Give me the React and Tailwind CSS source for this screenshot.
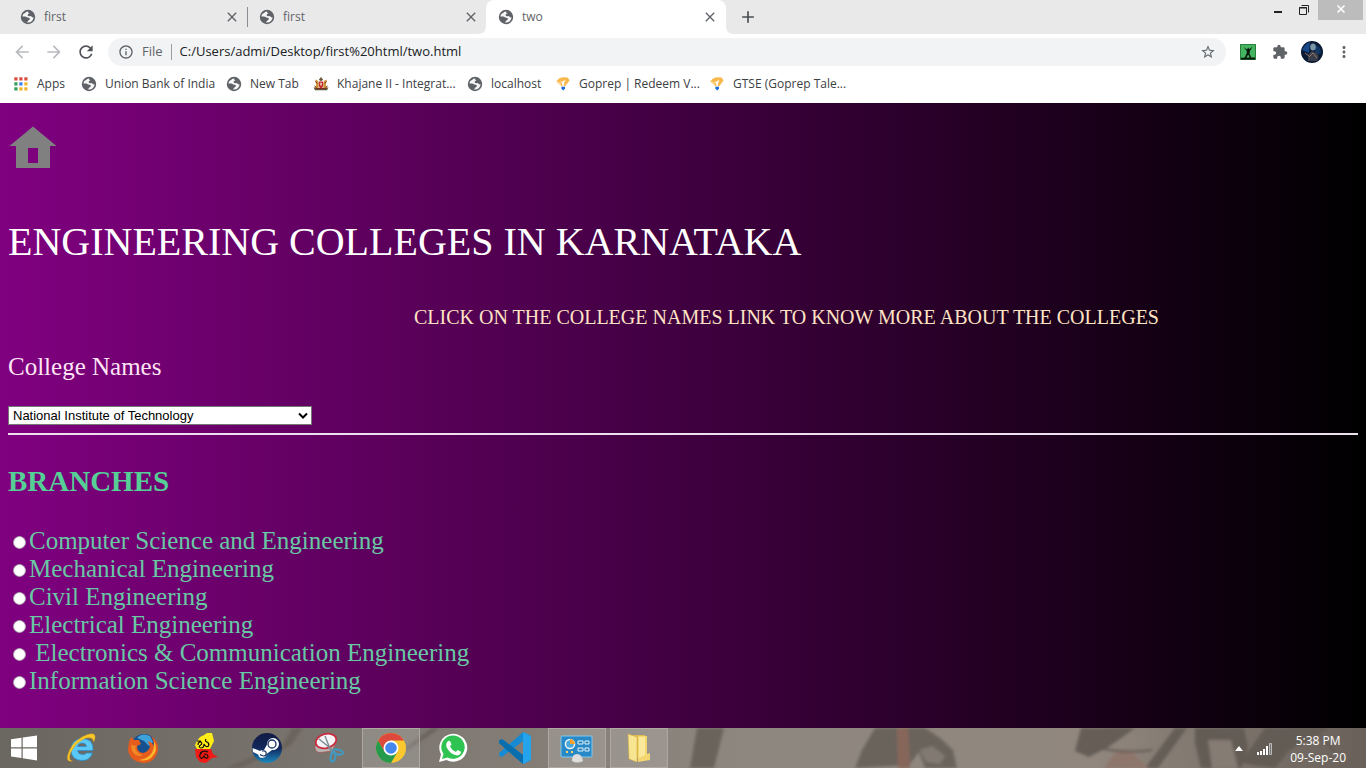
import React from "react";
import { MdArrowBack, MdArrowForward, MdRefresh, MdStarBorder, MdExtension, MdMoreVert, MdInfoOutline, MdClose, MdAdd } from "react-icons/md";

const branches = [
  "Computer Science and Engineering",
  "Mechanical Engineering",
  "Civil Engineering",
  "Electrical Engineering",
  "\u00a0Electronics & Communication Engineering",
  "Information Science Engineering",
];

function Globe() {
  return (
    <svg viewBox="0 0 16 16" className="size-4 shrink-0" aria-hidden="true">
      <circle cx="8" cy="8" r="6.4" fill="#f6f6f6" stroke="#5f6368" strokeWidth="1.6" />
      <path d="M8.6 1.6A6.4 6.4 0 0 1 14.4 8L13 8.6 11.6 8 11.2 7 9 7.2 7.6 6.4 8 5 9.4 4.4 8 3.2Z" fill="#5f6368" />
      <path d="M1.6 7.4 5.4 7.4 7.4 8.6 9.6 9 9.8 10.6 8.4 11.4 7.6 12.6 6.6 14.2A6.4 6.4 0 0 1 1.6 7.4Z" fill="#5f6368" />
      <path d="M2 5.2 4.4 2.6 6.4 1.8 5.2 4Z" fill="#5f6368" />
    </svg>
  );
}

function Tab({ title, active, divider }) {
  return (
    <div className={active ? "relative flex h-full w-60 items-center rounded-t-lg bg-white pr-2 pl-3" : "flex h-full w-[239px] items-center pr-[7px] pl-3"}>
      {active && (
        <>
          <svg viewBox="0 0 8 8" className="absolute bottom-0 -left-2 size-2" aria-hidden="true"><path d="M8 0V8H0Q8 8 8 0Z" fill="#fff" /></svg>
          <svg viewBox="0 0 8 8" className="absolute -right-2 bottom-0 size-2" aria-hidden="true"><path d="M0 0V8H8Q0 8 0 0Z" fill="#fff" /></svg>
        </>
      )}
      <Globe />
      <span className="ml-2 flex-1 text-[#5f6368]">{title}</span>
      <button aria-label={"Close " + title} className="flex size-4 items-center justify-center text-[#5f6368]">
        <MdClose className="size-4" />
      </button>
      {divider && <span className="-mr-2 ml-[7px] h-5 w-px bg-[#8a8d91]" />}
    </div>
  );
}

function AppsIcon() {
  const colors = ["#d94a3d", "#d94a3d", "#d94a3d", "#2f9e58", "#3b7ded", "#f0b429", "#2f9e58", "#f0b429", "#f0b429"];
  return (
    <svg viewBox="0 0 14 14" className="mx-px size-3.5" aria-hidden="true">
      {colors.map((c, i) => (
        <rect key={i} x={(i % 3) * 5 + 0.3} y={Math.floor(i / 3) * 5 + 0.3} width="3.2" height="3.2" fill={c} />
      ))}
    </svg>
  );
}

function Emblem() {
  return (
    <svg viewBox="0 0 16 16" className="size-4" aria-hidden="true">
      <path d="M8 1 5.800 3.800 8 5.300 10.200 3.800Z" fill="#6d5a3c" />
      <path d="M2.200 3.800Q4.500 3.500 5.500 6L5.800 12H1.500L3.200 9Z M13.800 3.800Q11.500 3.500 10.500 6L10.200 12h4.300L12.800 9Z" fill="#cf9a3d" />
      <path d="M5.800 5.500h4.400v4.200Q9.600 12 8 12.600 6.400 12 5.800 9.700Z" fill="#c62d2d" />
      <path d="M7.300 6.800h1.400v2.600H7.300z" fill="#f4e9d2" />
      <path d="M0.500 11.200 4 12.600 8 12 12 12.600 15.500 11.200 14 14.300H2Z" fill="#5b5a38" />
      <path d="M2.500 5.400 4.200 7.500M13.500 5.400 11.800 7.500M3 12.500h10M1.500 10l2 1.500M14.500 10l-2 1.500" stroke="#7d2a22" strokeWidth="1" />
    </svg>
  );
}

function Goprep() {
  return (
    <svg viewBox="0 0 16 16" className="size-4" aria-hidden="true">
      <path d="M4 2.600 7.500 1.200 12.600 1.600 14.600 4.600 10.200 10.200H6.600L1.400 5.200Z" fill="#f9b84b" />
      <path d="M5.200 4.800 7.200 5.900 8.800 4.600 10.600 4.600 9.200 6.600 9 9.800H7.400L7 7.300Z" fill="#fff" />
      <path d="M1.400 5.200 6.600 10.200 5.400 6.200Z" fill="#fbd48b" />
      <path d="M6.400 10.800h3.600v2L8.200 14.500 6.400 12.800Z" fill="#1a6fe0" />
    </svg>
  );
}

const bookmarks = [
  { label: "Apps", icon: <AppsIcon />, width: "w-[68px]" },
  { label: "Union Bank of India", icon: <Globe />, width: "w-[145px]" },
  { label: "New Tab", icon: <Globe />, width: "w-[87px]" },
  { label: "Khajane II - Integrat...", icon: <Emblem />, width: "w-[154px]" },
  { label: "localhost", icon: <Globe />, width: "w-[88px]" },
  { label: "Goprep | Redeem V...", icon: <Goprep />, width: "w-[154px]" },
  { label: "GTSE (Goprep Tale...", icon: <Goprep />, width: "w-[154px]" },
];

function BrowserChrome() {
  return (
    <header className="bg-white font-['Open_Sans','Noto_Sans',sans-serif] text-xs text-[#3c4043]">
      <div className="flex h-[34px] bg-[#e9e9e9] pl-2">
        <Tab title="first" divider />
        <Tab title="first" />
        <Tab title="two" active />
        <button aria-label="New tab" className="ml-3 flex items-center text-[#4a4d51]"><MdAdd className="size-5" /></button>
        <div className="ml-auto flex h-5 text-[#222]">
          <button aria-label="Minimize" className="flex w-7 items-center justify-center">
            <svg viewBox="0 0 12 12" className="size-3"><path d="M2 7h8v2H2z" fill="currentColor" /></svg>
          </button>
          <button aria-label="Restore" className="flex w-6 items-center justify-center">
            <svg viewBox="0 0 12 12" className="size-3" fill="none" stroke="currentColor"><path d="M1.500 3.500h7v7h-7z M3.500 1.500h7v7" /><path d="M1 4h8" /></svg>
          </button>
          <button aria-label="Close window" className="mr-[3px] ml-0.5 flex w-[45px] items-center justify-center bg-[#bcbcbc] pb-0.5 text-white">
            <svg viewBox="0 0 10 10" className="size-2.5" stroke="currentColor" strokeWidth="1.6"><path d="M1.500 1.500 8.500 8.500M8.500 1.500 1.500 8.500" /></svg>
          </button>
        </div>
      </div>
      <div className="flex h-9 items-center pr-[13px] pl-3">
        <button aria-label="Back" className="mr-3 text-[#b9bbbe]"><MdArrowBack className="size-5" /></button>
        <button aria-label="Forward" className="mr-3 text-[#b9bbbe]"><MdArrowForward className="size-5" /></button>
        <button aria-label="Reload" className="mr-3 text-[#505357]"><MdRefresh className="size-5" /></button>
        <div className="flex h-7 flex-1 items-center rounded-full bg-[#f1f3f4] pr-2.5 pl-2.5">
          <MdInfoOutline className="size-4 text-[#5f6368]" />
          <span className="ml-2 text-[13px] text-[#5f6368]">File</span>
          <span className="mx-2 h-4 w-px bg-[#9a9da1]" />
          <input aria-label="Address" className="min-w-0 flex-1 bg-transparent text-[13px] text-[#202124] outline-none" defaultValue="C:/Users/admi/Desktop/first%20html/two.html" />
          <button aria-label="Bookmark this page" className="text-[#5f6368]"><MdStarBorder className="size-4" /></button>
        </div>
        <button aria-label="Green extension" className="ml-3.5">
          <svg viewBox="0 0 16 16" className="size-4"><path d="M0 0h16v16H0z" fill="#43b45f" /><path d="M.5 .5h15v15H.5z" fill="none" stroke="#2c7c3f" /><path d="M3.500 3 7 5.600 8.200 3.500 9.400 5.200 12.500 2.500 10 7 9.500 9.500 11.500 14H10L8.200 10.500 6 14H4.500L6.800 9V7Z M1 13.800 15 13.500v2H1Z" fill="#08170c" /></svg>
        </button>
        <button aria-label="Extensions" className="ml-4 text-[#5f6368]"><MdExtension className="size-4" /></button>
        <button aria-label="Profile" className="ml-[13px]">
          <svg viewBox="0 0 22 22" className="size-[22px]"><circle cx="11" cy="11" r="11" fill="#0b1a35" /><path d="M1 9Q4 3 9 1L8 12Z" fill="#16488a" /><path d="M14 4Q20 5 20 12L14 15Z" fill="#123765" /><ellipse cx="12" cy="6" rx="2.8" ry="3.6" fill="#7896a8" /><path d="M7 20Q6 12 11 10L16 12Q19 16 16 20Z" fill="#393f4a" /><path d="M8 16 12 12 16 17M4 12l4 3" stroke="#9a7869" fill="none" /></svg>
        </button>
        <button aria-label="Menu" className="ml-3 text-[#5f6368]"><MdMoreVert className="size-[18px]" /></button>
      </div>
      <nav aria-label="Bookmarks" className="flex h-[33px] items-start pt-1.5 pl-[13px]">
        {bookmarks.map((b) => (
          <a key={b.label} href="#bookmark" className={"flex shrink-0 items-center gap-2 whitespace-nowrap " + b.width}>
            {b.icon}
            <span>{b.label}</span>
          </a>
        ))}
      </nav>
    </header>
  );
}

function Page() {
  return (
    <main className="flex-1 bg-linear-to-r/srgb from-[#800080] to-black px-2 pb-4 font-['Liberation_Serif',serif]">
      <a href="#home" aria-label="Home" className="block w-[50px] pt-5">
        <svg viewBox="0 0 50 50" className="size-[50px]"><path fillRule="evenodd" d="M25 3.500 48.500 23H42V45H8V23H1.500ZM20 25V40H30V25Z" fill="#808080" /></svg>
      </a>
      <h1 className="mt-[46px] text-[40px] leading-[46px] text-white">ENGINEERING COLLEGES IN KARNATAKA</h1>
      <p className="mt-10 pl-[406px] text-xl leading-6 whitespace-nowrap text-[#ffe4c4]">CLICK ON THE COLLEGE NAMES LINK TO KNOW MORE ABOUT THE COLLEGES</p>
      <label htmlFor="college" className="mt-6 block text-[25px] leading-7 text-[#ffe4f5]">College Names</label>
      <div className="relative mt-[25px] w-[304px]">
        <select id="college" className="block h-[19px] w-full appearance-none border border-[#767676] bg-white pr-4 pl-1 font-['Liberation_Sans',sans-serif] text-[13px] leading-4 text-black">
          <option>National Institute of Technology</option>
        </select>
        <svg viewBox="0 0 10 8" className="pointer-events-none absolute top-1.5 right-1 h-2 w-2.5" fill="none" stroke="#000" strokeWidth="2"><path d="M1 1.500 5 5.500 9 1.500" /></svg>
      </div>
      <hr className="mt-2 h-0.5 border-0 bg-[#eee0ee]" />
      <h2 className="mt-[29px] text-[29px] leading-[34px] font-bold text-[#55cf95]">BRANCHES</h2>
      <fieldset aria-label="Branches" className="mt-[29px]">
        {branches.map((b) => (
          <label key={b} className="flex h-7 items-center pl-[5px] text-[25px] leading-7 whitespace-pre text-[#68c8a4]">
            <input type="radio" name="branch" className="mt-0.5 mr-[3px] size-[13px] appearance-none rounded-full border border-[#a9a0a9] bg-white" />
            {b}
          </label>
        ))}
      </fieldset>
    </main>
  );
}

const taskIcons = [
  ["Start", <svg viewBox="0 0 28 28" className="size-7"><path d="M1 5.200 11.500 3.700V13.200H1Z M12.700 3.500 27 1.500V13.200H12.700Z M1 14.500H11.500V24L1 22.500Z M12.700 14.500H27V26.500L12.700 24.300Z" fill="#fff" /></svg>],
  ["Internet Explorer", <svg viewBox="0 0 32 32" className="size-8"><path d="M28 18.500H12.500Q13 22.500 17.500 22.500 20.500 22.500 21.500 21H27.500Q25 28.500 17 28.500 6 28 6 17.500 7 7 17 6.500 29 7 28 18.500ZM12.500 14.500H21.500Q21 11 17 11 13.500 11 12.500 14.500Z" fill="#5cc8f5" stroke="#2b90cf" strokeWidth=".8" /><path d="M7.500 29Q1.500 30.500 2.500 24 5 12 17 5 29 -1 30 4 30.500 7 28.500 10 28.500 4.500 21 6 11 10 6 20 2.500 28 7.500 29Z" fill="#f8c829" stroke="#d69b18" strokeWidth=".4" /></svg>],
  ["Firefox", <svg viewBox="0 0 32 32" className="size-8"><circle cx="17" cy="15" r="13" fill="#17508f" /><path d="M10 6Q15 0 23 4L26 10 22 14 17 9Z" fill="#3fa2d9" /><path d="M2 10 4 5 7 8 12 8 14 12 10 14Q10 20 16 21 21 20 23 15L21 9Q25 10 27 14 27 6 22 3 32 8 31 18 28 31 16 31 2 29 1 17Z" fill="#e65c1d" /><path d="M27 9Q32 18 25 25 20 30 12 28 28 26 27 9Z" fill="#fbb62b" /><path d="M4 13 10 14 8 16Q10 22 16 23 10 26 5 19Z" fill="#f28b25" /></svg>],
  ["Nudi", <svg viewBox="0 0 32 32" className="size-8"><path d="M11 5 15 3 18 1 23 1 25 9 21 17H8L6 13 8 9Z" fill="#ffed18" /><path d="M6 17H22L24 22 29 25 23 26 17 31 11 30 7 25Z" fill="#f01b17" /><path d="M8 9H12M9 13Q9 9.500 12 10 14 12 11 13.500 9 15 12 16 15 16 15 12 17 16 19.500 14 20.500 11 18 10 15.500 9 17 7M11 21Q15 18 19 20M13 21Q10 22 11 25 13 28 15 24 17 28 19 25 19 22 15 22" fill="none" stroke="#151008" strokeWidth="1.200" /></svg>],
  ["Steam", <svg viewBox="0 0 32 32" className="size-8"><defs><linearGradient id="steam" x1="0" x2="0" y1="0" y2="1"><stop stopColor="#111c43" /><stop offset=".5" stopColor="#12275b" /><stop offset="1" stopColor="#1b8ac0" /></linearGradient></defs><circle cx="16" cy="16" r="15" fill="url(#steam)" /><path d="M1.500 16 9 19Q11 17.500 13 18L16 12.500A6 6 0 1 1 21 18L15.500 22A4.200 4.200 0 0 1 7.200 22.500L2 20Z" fill="#fff" /><circle cx="21" cy="12" r="4" fill="#fff" stroke="#183361" strokeWidth="1.300" /><path d="M9 22.600 11 23.400A2.600 2.600 0 1 0 13 18.800L11 19" fill="none" stroke="#183361" strokeWidth="1.200" /></svg>],
  ["Snipping Tool", <svg viewBox="0 0 32 32" className="size-8"><path d="M2 13Q1 21 8 20.500L19 19 24 9Z" fill="#b8b5b3" stroke="#aa4d50" strokeWidth=".7" /><ellipse cx="13" cy="9" rx="10.500" ry="7" fill="#f4f3f5" stroke="#c82b3f" strokeWidth="1.800" transform="rotate(-15 13 9)" /><path d="M6 7 22 20M12 4 19 22" stroke="#7b8b93" strokeWidth="1.400" /><ellipse cx="25" cy="20" rx="5" ry="2.300" transform="rotate(15 25 20)" fill="none" stroke="#3e9bc3" strokeWidth="2" /><ellipse cx="20" cy="25" rx="2.300" ry="4.500" transform="rotate(12 20 25)" fill="none" stroke="#3e9bc3" strokeWidth="2" /></svg>],
  ["Google Chrome", <svg viewBox="0 0 32 32" className="size-8"><circle cx="16" cy="16" r="15" fill="#fbc72f" /><path d="M3 8.500A15 15 0 0 1 29 8.500H16L9.500 20Z" fill="#dd493c" /><path d="M3 8.500A15 15 0 0 0 16 31L22.500 19.800 9.500 19.800Z" fill="#25994c" /><circle cx="16" cy="16" r="7.500" fill="#fff" /><circle cx="16" cy="16" r="5.800" fill="#4587ef" /></svg>, true],
  ["WhatsApp", <svg viewBox="0 0 32 32" className="size-8"><path d="M2 30 4 22.500A14 14 0 1 1 9.500 28Z" fill="#fff" /><path d="M5 27 6.500 22A11.700 11.700 0 1 1 10.500 25.500Z" fill="#2fc351" /><path d="M11 9Q12.500 8 13.500 10L14.500 12.500 13 14.500Q15 18.500 19 20L20.500 18 24 19.800Q24 23 20 23.500 13 22.500 9.500 15 8.500 11 11 9Z" fill="#fff" /></svg>],
  ["Visual Studio Code", <svg viewBox="0 0 32 32" className="size-8"><path d="M24 0 32 4V28L24 32 10 19.500 3 25 0 23.500V21L6 16 0 11V8.500L3 7 10 12.500ZM24 9 15 16 24 23Z" fill="#168bd4" fillRule="evenodd" /><path d="M0 8.500 3 7 24 23V32L0 11Z" fill="#086eae" /><path d="M24 0 32 4V28L24 32Z" fill="#25a4ee" /></svg>],
  ["Control Panel", <svg viewBox="0 0 34 32" className="h-8 w-[34px]"><rect x="1" y="4" width="31" height="21" rx="1" fill="#2789c7" stroke="#83caeb" /><circle cx="10" cy="12" r="4.600" fill="#4ba8dc" stroke="#eef6f8" strokeWidth="1.500" /><path d="M10 12V7A5 5 0 0 1 15 12Z" fill="#f3a22e" /><path d="M18 9h5v3h-5zM25 9h4v3h-4zM18 16h5v3h-5zM25 16h4v3h-4z" fill="#267fb7" stroke="#e2f5fc" /><path d="M6 20h2M11 20h2" stroke="#f9d268" strokeWidth="2" /><path d="M12 29Q12 22 17 22T23 29Q17 32 12 29Z" fill="#dddedb" /></svg>, true],
  ["File Explorer", <svg viewBox="0 0 32 32" className="size-8"><path d="M10 3H22L24 22 13 27Z" fill="#e0bb4d" /><path d="M5 2 14 5V30L6 27Z" fill="#f8e591" stroke="#d4ac42" strokeWidth=".6" /><path d="M15 4H24V22L27 21V28L15 30Z" fill="#f4d66f" /><path d="M16 5H22V23L16 26Z" fill="#fae99c" /></svg>, true],
];

function Taskbar() {
  return (
    <footer className="relative flex h-10 items-stretch overflow-hidden bg-[#827b73] font-['Open_Sans','Noto_Sans',sans-serif]">
      <svg viewBox="0 0 1366 40" preserveAspectRatio="none" className="absolute inset-0 size-full" aria-hidden="true">
        <defs>
          <linearGradient id="wall"><stop stopColor="#6a6660" /><stop offset=".3" stopColor="#7d7871" /><stop offset=".55" stopColor="#8e877f" /><stop offset=".8" stopColor="#91877e" /><stop offset="1" stopColor="#686059" /></linearGradient>
          <filter id="soft" x="-20%" y="-20%" width="140%" height="140%"><feGaussianBlur stdDeviation="1.800" /></filter>
        </defs>
        <path d="M0 0h1366v40H0z" fill="url(#wall)" />
        <g filter="url(#soft)">
          <path d="M225 40 283 17 292 0H303L290 18 240 40ZM405 20 432 0H440L408 22ZM697 0H724L714 40H690ZM680 28 695 4" fill="#6a635c" />
          <path d="M855 40 862 22 875 0H925L940 10 953 22 957 40H925L919 24 909 37Z" fill="#6b645b" />
          <path d="M920 22 932 18 945 28 940 36 926 34Z" fill="#827a72" />
          <path d="M897 0H908L910 40H898Z" fill="#87665a" />
          <path d="M1075 23 1081 0H1135L1110 18 1089 29ZM1145 40 1175 0H1187L1158 40Z" fill="#655d56" />
          <path d="M1195 0H1244L1248 19 1241 40H1201L1195 15ZM1240 35 1265 0H1330L1290 22 1275 40Z" fill="#645c55" />
          <path d="M1115 25 1131 23 1148 40H1104Z" fill="#8f766c" />
          <path d="M1208 12 1231 12 1238 40H1212Z" fill="#857c73" />
          <path d="M1100 20Q1125 26 1152 22M1313 0 1335 24" stroke="#655a52" strokeWidth="2" fill="none" />
        </g>
      </svg>
      <nav aria-label="Taskbar" className="relative flex gap-1">
        {taskIcons.map(([name, icon, running]) => (
          <button key={name} aria-label={name} className={running ? "flex w-[58px] items-center justify-center border border-[#aea8a1] bg-white/15" : name === "Start" ? "flex w-12 items-center justify-center" : "flex w-[58px] items-center justify-center"}>
            {icon}
          </button>
        ))}
      </nav>
      <div className="relative ml-auto flex items-center pt-0.5 pr-5 text-white">
        <svg viewBox="0 0 10 6" className="mr-[13px] h-1.5 w-2.5" aria-hidden="true"><path d="M5 0 9 5H1Z" fill="#fff" /></svg>
        <svg viewBox="0 0 16 12" className="mr-[17px] h-3 w-4" aria-hidden="true"><path d="M0 9h2v3H0zM3 8h2v4H3zM6 6h2v6H6zM9 3h2v9H9z" fill="#fff" /><path d="M12.500 .5h2v11h-2z" fill="#777" stroke="#bbb" /></svg>
        <time className="text-center text-xs leading-[17px]">5:38 PM<br />09-Sep-20</time>
      </div>
    </footer>
  );
}

export default function App() {
  return (
    <div className="flex min-h-screen flex-col">
      <BrowserChrome />
      <Page />
      <Taskbar />
    </div>
  );
}
